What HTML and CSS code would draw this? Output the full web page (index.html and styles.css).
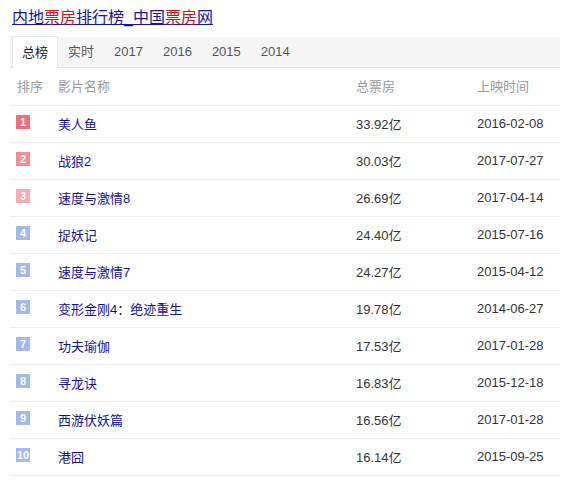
FILE: index.html
```html
<!DOCTYPE html>
<html lang="zh">
<head>
<meta charset="utf-8">
<link rel="stylesheet" href="styles.css">
</head>
<body>
<div class="page">
  <h1 class="title"><a href="#">内地<span class="red">票房</span>排行榜_中国<span class="red">票房</span>网</a></h1>
  <div class="tabs">
    <span class="tab active">总榜</span>
    <span class="tab">实时</span>
    <span class="tab">2017</span>
    <span class="tab">2016</span>
    <span class="tab">2015</span>
    <span class="tab">2014</span>
  </div>
  <div class="table">
    <div class="row head"><span>排序</span><span>影片名称</span><span>总票房</span><span>上映时间</span></div>
    <div class="row"><span><i class="badge r1">1</i></span><a href="#">美人鱼</a><span>33.92亿</span><span>2016-02-08</span></div>
    <div class="row"><span><i class="badge r2">2</i></span><a href="#">战狼2</a><span>30.03亿</span><span>2017-07-27</span></div>
    <div class="row"><span><i class="badge r3">3</i></span><a href="#">速度与激情8</a><span>26.69亿</span><span>2017-04-14</span></div>
    <div class="row"><span><i class="badge">4</i></span><a href="#">捉妖记</a><span>24.40亿</span><span>2015-07-16</span></div>
    <div class="row"><span><i class="badge">5</i></span><a href="#">速度与激情7</a><span>24.27亿</span><span>2015-04-12</span></div>
    <div class="row"><span><i class="badge">6</i></span><a href="#">变形金刚4：绝迹重生</a><span>19.78亿</span><span>2014-06-27</span></div>
    <div class="row"><span><i class="badge">7</i></span><a href="#">功夫瑜伽</a><span>17.53亿</span><span>2017-01-28</span></div>
    <div class="row"><span><i class="badge">8</i></span><a href="#">寻龙诀</a><span>16.83亿</span><span>2015-12-18</span></div>
    <div class="row"><span><i class="badge">9</i></span><a href="#">西游伏妖篇</a><span>16.56亿</span><span>2017-01-28</span></div>
    <div class="row"><span><i class="badge">10</i></span><a href="#">港囧</a><span>16.14亿</span><span>2015-09-25</span></div>
  </div>
  <div class="more">查看更多榜单</div>
</div>
</body>
</html>
```
FILE: styles.css
```css
html, body { margin: 0; padding: 0; background: #fff; }
body {
  font-family: "Liberation Sans", "Noto Sans CJK SC", sans-serif;
  font-size: 13px;
  color: #333;
}
.page { padding: 7px 23px 0 10px; }
.title {
  margin: 0 0 0 2px;
  font-size: 16px;
  font-weight: normal;
  line-height: 22px;
  height: 30px;
}
.title a { text-decoration: underline; color: #14149e; }
.title .red { color: #c5161d; }
.tabs {
  display: flex;
  background: #f5f5f5;
  border-bottom: 1px solid #e0e0e0;
  height: 30px;
  padding-left: 2px;
}
.tab {
  padding: 0 10px;
  line-height: 29px;
  color: #555;
  font-size: 13px;
}
.tab.active {
  background: #fff;
  color: #222;
  border: 1px solid #e6e6e6;
  border-bottom: none;
  margin-top: -1px;
  line-height: 31px;
  height: 31px;
  padding: 0 9px;
}
.row {
  display: grid;
  grid-template-columns: 48px 298px 121px 1fr;
  align-items: center;
  box-sizing: border-box;
  height: 37px;
  padding-bottom: 2px;
  border-bottom: 1px solid #eee;
}
.row > *:first-child { padding-left: 6px; }
.row.head { color: #999; height: 38px; }
.row.head > *:first-child { padding-left: 7px; }
.row a { color: #12129b; text-decoration: none; }
.badge {
  display: inline-block;
  font-style: normal;
  width: 14px;
  height: 14px;
  line-height: 14px;
  text-align: center;
  color: #fff;
  font-weight: bold;
  font-size: 11px;
  background: #a3b8ec;
  vertical-align: middle;
  position: relative;
  top: -2px;
}
.badge.r1 { background: #ee7075; }
.badge.r2 { background: #f28d90; }
.badge.r3 { background: #f6abad; }
.more { color: #999; padding: 6px 0 0 2px; }
```
